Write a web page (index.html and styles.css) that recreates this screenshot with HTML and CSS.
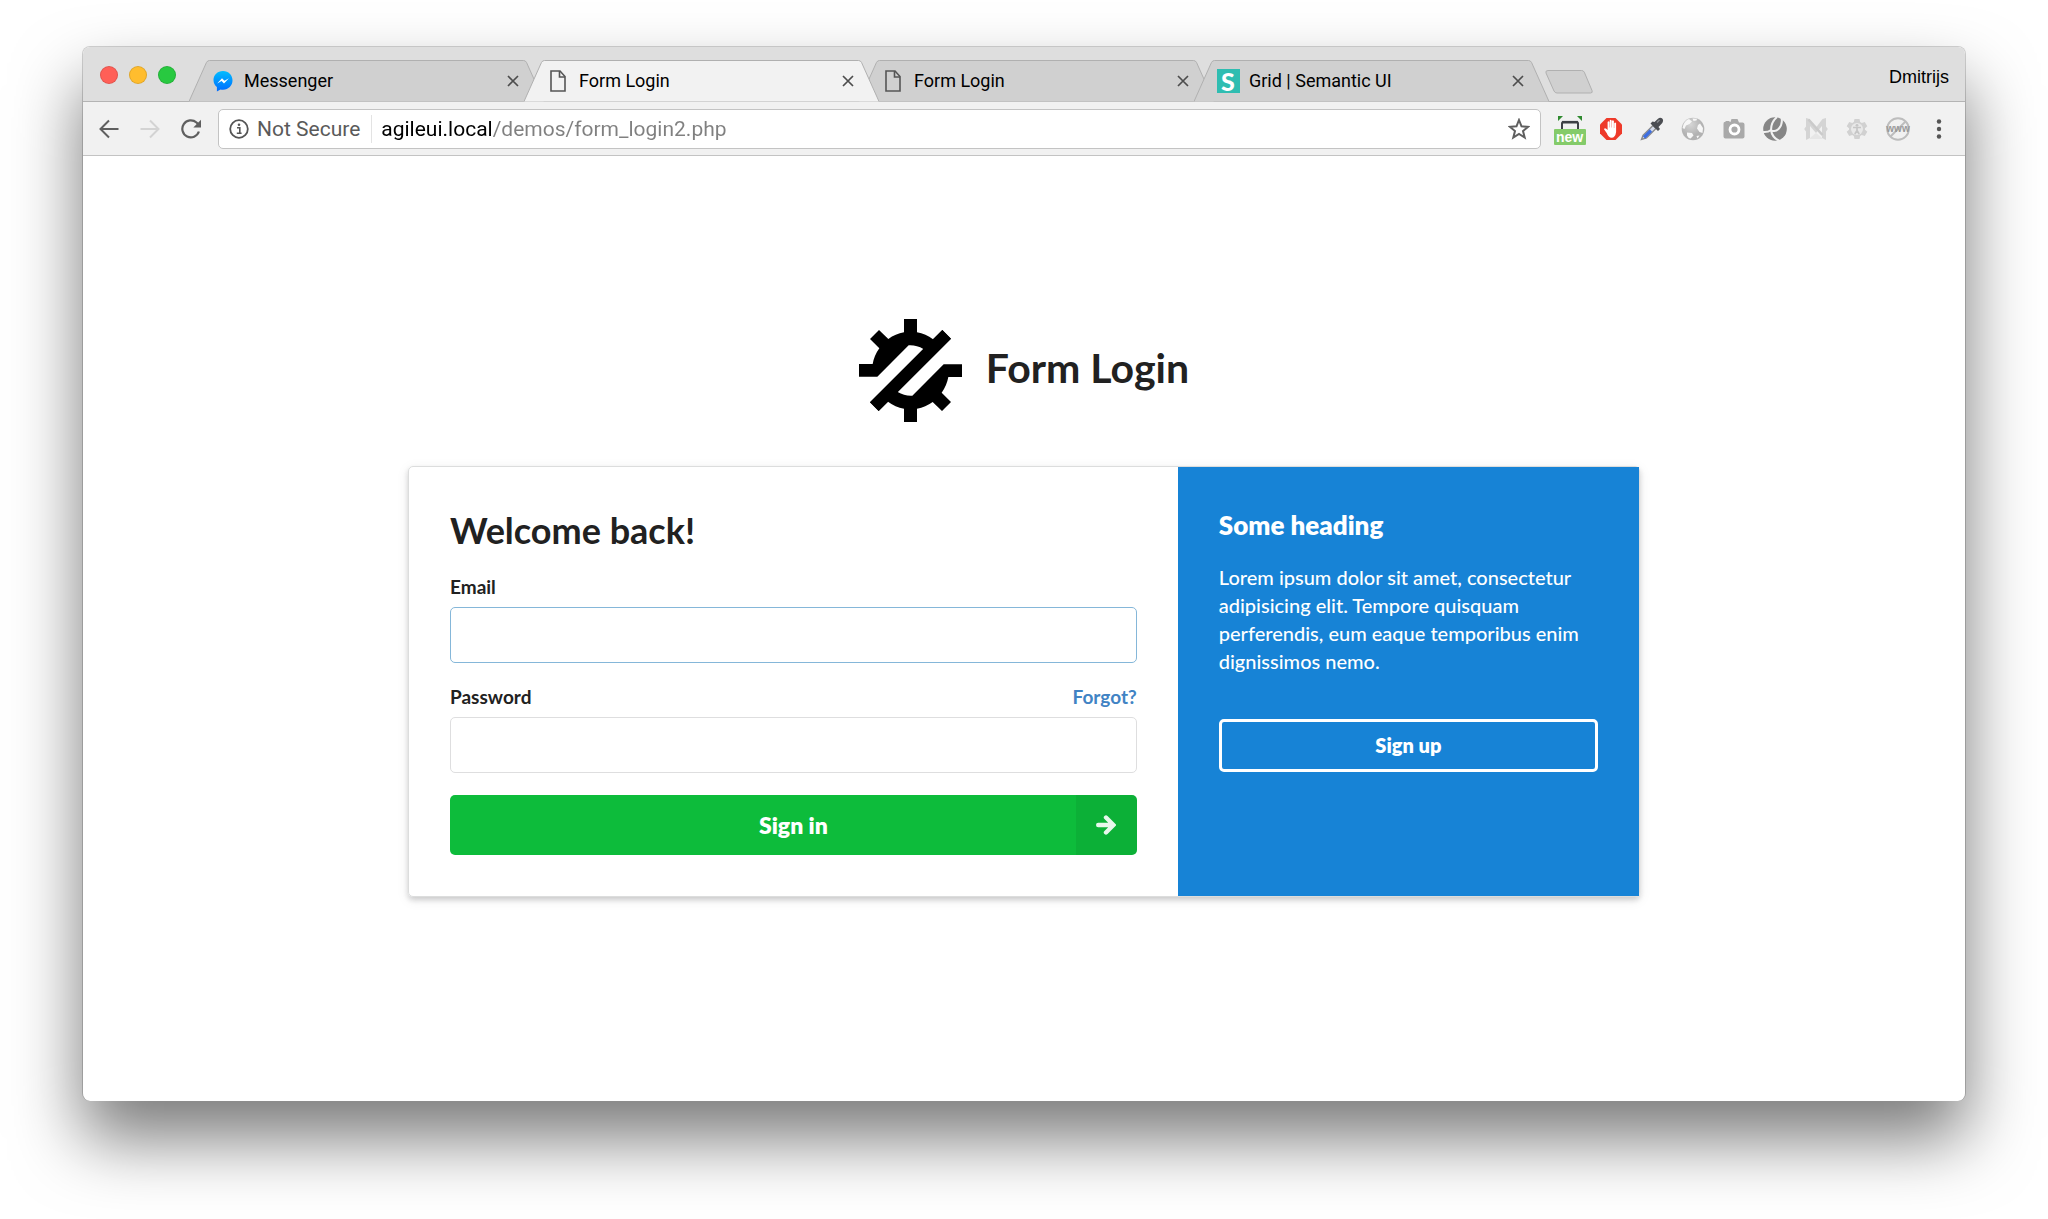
FILE: index.html
```html
<!DOCTYPE html>
<html lang="en">
<head>
<meta charset="utf-8">
<title>Form Login</title>
<link rel="stylesheet" href="styles.css">
</head>
<body>
<svg class="defs" aria-hidden="true">
  <symbol id="tab-shape" viewBox="0 0 356 42" preserveAspectRatio="none">
    <path d="M0 41.500L17.500 2.500Q18.500 .5 20.500 .5H335.500Q337.500 .5 338.500 2.500L356 41.500"/>
  </symbol>
  <symbol id="page" viewBox="0 0 16 22">
    <path d="M1 1h9l5 5.500V21H1z" fill="none" stroke="#555" stroke-width="1.600"/>
    <path d="M9.500 1v6H15" fill="none" stroke="#555" stroke-width="1.600"/>
  </symbol>
  <symbol id="close" viewBox="0 0 12 12">
    <path d="M1 1l10 10M11 1L1 11" stroke="#4d4d4d" stroke-width="1.700" fill="none"/>
  </symbol>
</svg>

<div class="window">
  <header class="tab-strip">
    <div class="lights">
      <button class="light red" aria-label="Close"></button>
      <button class="light yellow" aria-label="Minimise"></button>
      <button class="light green" aria-label="Zoom"></button>
    </div>
    <nav class="tabs">
      <div class="tab">
        <svg class="tab-bg"><use href="#tab-shape"/></svg>
        <span class="favicon"><svg width="20" height="21" viewBox="0 0 20 21"><defs><linearGradient id="msg" x1="0" y1="0" x2="0" y2="1"><stop offset="0" stop-color="#00bdff"/><stop offset="1" stop-color="#006aff"/></linearGradient></defs><path d="M10 0C4.400 0 .5 4 .5 9c0 3 1.300 5.400 3.400 7V20.500l3.600-2c.8.200 1.600.3 2.500.3 5.500 0 9.500-4.300 9.500-9.500S15.500 0 10 0z" fill="url(#msg)"/><path d="M4.200 12.400L9 7.300l2.500 2.500 4.400-2.500-4.900 5.200-2.400-2.600z" fill="#fff"/></svg></span>
        <a href="#" class="tab-title">Messenger</a>
        <button class="tab-close" aria-label="Close tab"><svg width="12" height="12"><use href="#close"/></svg></button>
      </div>
      <div class="tab active">
        <svg class="tab-bg"><use href="#tab-shape"/></svg>
        <span class="favicon"><svg width="16" height="22"><use href="#page"/></svg></span>
        <a href="#" class="tab-title">Form Login</a>
        <button class="tab-close" aria-label="Close tab"><svg width="12" height="12"><use href="#close"/></svg></button>
      </div>
      <div class="tab">
        <svg class="tab-bg"><use href="#tab-shape"/></svg>
        <span class="favicon"><svg width="16" height="22"><use href="#page"/></svg></span>
        <a href="#" class="tab-title">Form Login</a>
        <button class="tab-close" aria-label="Close tab"><svg width="12" height="12"><use href="#close"/></svg></button>
      </div>
      <div class="tab">
        <svg class="tab-bg"><use href="#tab-shape"/></svg>
        <span class="favicon"><span class="semantic">S</span></span>
        <a href="#" class="tab-title">Grid | Semantic UI</a>
        <button class="tab-close" aria-label="Close tab"><svg width="12" height="12"><use href="#close"/></svg></button>
      </div>
      <button class="new-tab" aria-label="New tab"><svg width="48" height="24" viewBox="0 0 48 24"><path d="M3 .5H36.500Q38.500 .5 39.300 2.200L47 20.500Q48 23 45.500 23H12Q10 23 9 21L1 3Q.2 .5 3 .5z" fill="#d0d0d0" stroke="#b0b0b0"/></svg></button>
    </nav>
    <span class="profile">Dmitrijs</span>
  </header>

  <div class="toolbar">
    <button class="nav-btn" aria-label="Back"><svg width="20" height="20" viewBox="0 0 20 20"><path d="M19.500 10H2M10 1.500L1.500 10l8.500 8.500" fill="none" stroke="#5f5f5f" stroke-width="2"/></svg></button>
    <button class="nav-btn" aria-label="Forward"><svg width="20" height="20" viewBox="0 0 20 20"><path d="M.5 10H18M10 1.500l8.500 8.500-8.500 8.500" fill="none" stroke="#d3d3d3" stroke-width="2"/></svg></button>
    <button class="nav-btn" aria-label="Reload"><svg width="20" height="20" viewBox="0 0 20 20"><path d="M17.900 12.500A8.500 8.500 0 1 1 15.500 3.500L17.500 5.500" fill="none" stroke="#5f5f5f" stroke-width="2.200"/><path d="M20 .8V8.500H12.300z" fill="#5f5f5f"/></svg></button>
    <div class="address">
      <svg width="20" height="20" viewBox="0 0 20 20"><circle cx="10" cy="10" r="8.800" fill="none" stroke="#555" stroke-width="1.800"/><path d="M8 8.700h2.800v5.600M7.800 14.300h4.800" fill="none" stroke="#555" stroke-width="1.600"/><circle cx="10" cy="5.700" r="1.300" fill="#555"/></svg>
      <label class="security" for="url">Not Secure</label>
      <input id="url" class="url" type="text" value="agileui.local/demos/form_login2.php">
      <button class="star" aria-label="Bookmark"><svg width="22" height="22" viewBox="0 0 22 22"><path d="M11 2l2.500 6.300 6.700.5-5.200 4.300 1.700 6.500L11 16l-5.700 3.600L7 13.100 1.800 8.800l6.700-.5z" fill="none" stroke="#5f5f5f" stroke-width="2"/></svg></button>
    </div>
    <div class="extensions">
      <button class="ext" aria-label="Screen capture"><span class="capture"><svg width="24" height="13" viewBox="0 0 24 13"><path d="M0 0h5L0 5zM24 0h-5l5 5z" fill="#2f8a2f"/><path d="M4 13V7.500Q4 6 5.500 6h13Q20 6 20 7.500V13" fill="none" stroke="#3d4045" stroke-width="2"/><path d="M4 6.200h16" stroke="#3d4045" stroke-width="2.600"/></svg><span class="new">new</span></span></button>
      <button class="ext" aria-label="Ad blocker"><svg width="24" height="24" viewBox="0 0 24 24"><path d="M7.500 1h9L23 7.500v9L16.500 23h-9L1 16.500v-9z" fill="#ee3a2a"/><path d="M7.700 16L5 12.300Q5.500 10.500 7.200 11.700L8.600 13V5Q9.500 3.700 10.400 5V10.500h.3V3.400Q11.600 2 12.600 3.400V10.500h.3V4Q13.900 2.700 14.900 4V11h.3V6.200Q16.200 5 17.100 6.200V15Q16.300 20.800 12.500 20.800 9.500 20.800 7.700 16z" fill="#fff"/></svg></button>
      <button class="ext" aria-label="Colour picker"><svg width="24" height="24" viewBox="0 0 24 24"><path d="M1.500 22.500L3 18.500 13 8.500l3 3-9.500 9.500z" fill="#d5dceb" stroke="#8b8b8b" stroke-width="1.400"/><path d="M4 20.500L11 13.500" stroke="#3f6fe0" stroke-width="3.200"/><path d="M10.500 6.500l7.500 7.500 2-2-1.500-2 3.800-4Q24 3 22 1.300 20 0 18 1.700L14.500 5 12.500 4.500z" fill="#4b4d52"/><path d="M17 5.500l2.500-2.500" stroke="#8a8c90" stroke-width="1.500"/></svg></button>
      <button class="ext" aria-label="Web tools"><svg width="24" height="24" viewBox="0 0 24 24"><defs><radialGradient id="globe" cx=".4" cy=".3"><stop offset="0" stop-color="#d6d6d6"/><stop offset="1" stop-color="#b2b2b2"/></radialGradient></defs><circle cx="12" cy="12" r="11.300" fill="url(#globe)"/><path d="M2.500 7.500Q4.500 3 8 2L11 4.500 8.500 7 5 8.500 3.500 12 1.500 11zM11.500 1.500L16 1.800 15.500 3.500 12.500 4zM19 6.500l3 4.500-.5 5L18.500 15l-2.500-3.500L17 8zM6 15.500l5 .5 1.500 2.500-3 3Q7 21 6 18.500zM15.500 19l3-.5-2 3z" fill="#f7f7f7"/></svg></button>
      <button class="ext" aria-label="Screenshot"><svg width="24" height="24" viewBox="0 0 24 24"><path d="M2.500 5h1V4h4V5h1L9.500 2h6L17 5.500H20.500q2 0 2 2v12q0 2-2 2h-17q-2 0-2-2V7q0-2 1-2z" fill="#a9a9a9"/><circle cx="12.500" cy="12.500" r="4.500" fill="#a9a9a9" stroke="#fff" stroke-width="2.800"/></svg></button>
      <button class="ext" aria-label="Browser tools"><svg width="24" height="24" viewBox="0 0 24 24"><circle cx="12" cy="12" r="11.800" fill="#868686"/><path d="M14 0Q8 5 8 13 12 15.500 15.500 12 20 7 18.500 1M0 15Q5 15.500 8 13M8 13Q9 20.500 16.500 24" fill="none" stroke="#f1f1f1" stroke-width="2"/></svg></button>
      <button class="ext" aria-label="Mail"><svg width="24" height="24" viewBox="0 0 24 24"><path d="M2 1L5.500 2 12 10.500 18.500 2 22 1v8.500L23.800 12 22 14.500V23L18 21V9L12 16 6 9V21L2 23V14.500L.2 12 2 9.500z" fill="#d4d4d4"/><path d="M6 21L12 16 18 21V22H6z" fill="#e6e6e6"/><path d="M4.500 2.500L18.500 18" stroke="#cacaca" stroke-width="2.600"/></svg></button>
      <button class="ext" aria-label="Accessibility"><svg width="24" height="24" viewBox="0 0 24 24"><path d="M9.500 2h5l.7 3 1.600.9 3-1 2.500 4.300-2.300 2v1.600l2.300 2-2.500 4.300-3-1-1.600.9-.7 3h-5l-.7-3-1.600-.9-3 1-2.500-4.300 2.300-2v-1.600l-2.300-2 2.500-4.300 3 1 1.600-.9z" fill="#d1d1d1"/><circle cx="12" cy="12" r="6" fill="#e9e9e9"/><circle cx="12" cy="8.300" r="1.400" fill="#c6c6c6"/><path d="M8 10.500h8M12 10v3.500L9.800 17M12 13.500l2.200 3.500" stroke="#c6c6c6" stroke-width="1.700" fill="none"/></svg></button>
      <button class="ext" aria-label="WWW"><svg width="26" height="24" viewBox="0 0 26 24"><circle cx="13" cy="12" r="10.800" fill="none" stroke="#bdbdbd" stroke-width="2"/><path d="M5.500 19.500l15-15" stroke="#bdbdbd" stroke-width="2"/><text x="13" y="15" text-anchor="middle" class="www">www</text></svg></button>
      <button class="ext" aria-label="Menu"><svg width="6" height="22" viewBox="0 0 6 22"><g fill="#555"><circle cx="3" cy="3.500" r="2.200"/><circle cx="3" cy="11" r="2.200"/><circle cx="3" cy="18.500" r="2.200"/></g></svg></button>
    </div>
  </div>

  <main class="page">
    <div class="brand">
      <svg width="103" height="103" viewBox="57 57 309 309"><defs><path id="half" d="M57 192H98A116 116 0 0 1 118 145L90 117 117 90 145 117A116 116 0 0 1 192 97V57H231V97A116 116 0 0 1 279 118L307 90 333 116 116 333 90 307 250 147A77 77 0 0 0 206 136L112 230H57z"/></defs><use href="#half"/><use href="#half" transform="rotate(180 211.500 211.500)"/></svg>
      <h1>Form Login</h1>
    </div>
    <div class="card">
      <form class="login">
        <h2>Welcome back!</h2>
        <div class="field">
          <div class="label-row"><label for="email">Email</label></div>
          <input id="email" class="focused" type="email">
        </div>
        <div class="field">
          <div class="label-row"><label for="password">Password</label><a href="#">Forgot?</a></div>
          <input id="password" type="password">
        </div>
        <button class="sign-in" type="button"><span class="sign-in-text">Sign in</span><span class="sign-in-icon"><svg width="20" height="20" viewBox="0 0 20 20"><path d="M2.200 10h14M10 2.500L17.500 10 10 17.500" fill="none" stroke="#e8f7ec" stroke-width="4.400" stroke-linecap="round" stroke-linejoin="miter"/></svg></span></button>
      </form>
      <aside class="promo">
        <h3>Some heading</h3>
        <p>Lorem ipsum dolor sit amet, consectetur adipisicing elit. Tempore quisquam perferendis, eum eaque temporibus enim dignissimos nemo.</p>
        <button class="sign-up" type="button">Sign up</button>
      </aside>
    </div>
  </main>
</div>
</body>
</html>
```
FILE: styles.css
```css
* { box-sizing: border-box; }

body {
  margin: 0;
  min-height: 100vh;
  padding: 46px 82px 118px;
  display: flex;
  background: #fff;
  color: #212121;
  font-family: Lato, "Liberation Sans", sans-serif;
  overflow-x: hidden;
}

h1, h2, h3, p { margin: 0; }
button { padding: 0; border: 0; background: none; font: inherit; color: inherit; cursor: pointer; }
a { text-decoration: none; color: inherit; }
svg { display: block; flex: none; }
.defs { position: absolute; width: 0; height: 0; }

.window {
  flex: 1;
  min-width: 0;
  display: flex;
  flex-direction: column;
  border: 1px solid rgba(0, 0, 0, .17);
  border-bottom-width: 0;
  border-radius: 8px;
  background: #fff;
  background-clip: padding-box;
  box-shadow: 0 38px 68px rgba(0, 0, 0, .52);
}

/* Tab strip */
.tab-strip {
  display: flex;
  align-items: flex-end;
  height: 55px;
  padding-right: 16px;
  background: #dedede;
  border-bottom: 1px solid #b4b4b4;
  border-radius: 7px 7px 0 0;
  font: 18px/24px Roboto, sans-serif;
  color: #000;
}
.lights { display: flex; gap: 11px; padding: 0 10px 0 17px; width: 106px; margin-bottom: 17px; }
.light { flex: none; width: 18px; height: 18px; border-radius: 50%; border: 1px solid rgba(0, 0, 0, .12); }
.red { background: #ff5f57; }
.yellow { background: #ffbd2e; }
.green { background: #28c940; }
.tabs { flex: 1; min-width: 0; display: flex; align-items: flex-end; margin-bottom: -1px; }
.tab {
  position: relative;
  flex: 0 1 355px;
  min-width: 0;
  height: 42px;
  margin-right: -20px;
  padding: 0 25px 0 22px;
  display: flex;
  align-items: center;
}
.tab-bg { position: absolute; inset: 0; width: 100%; height: 100%; fill: #d0d0d0; stroke: #b0b0b0; }
.active { z-index: 1; }
.active .tab-bg { fill: #f2f2f2; }
.favicon { position: relative; width: 24px; display: flex; justify-content: center; }
.semantic { width: 23px; height: 24px; background: #2fbdb1; color: #fff; font: 900 25px/24px Lato, sans-serif; text-align: center; }
.tab-title { position: relative; flex: 1; min-width: 0; margin-left: 9px; white-space: nowrap; overflow: hidden; }
.tab-close { position: relative; }
.new-tab { margin: 0 0 8px 16px; }
.profile { font: 18px/24px "Liberation Sans", sans-serif; margin-bottom: 12px; }

/* Toolbar */
.toolbar {
  display: flex;
  align-items: center;
  height: 54px;
  padding-left: 5px;
  background: #f1f1f1;
  border-bottom: 1px solid #c3c3c3;
  font: 21px/28px Roboto, sans-serif;
}
.nav-btn { width: 41px; height: 40px; display: grid; place-items: center; }
.address {
  flex: 1;
  min-width: 0;
  height: 40px;
  margin-left: 7px;
  padding: 0 10px 0 10px;
  display: flex;
  align-items: center;
  background: #fff;
  border: 1px solid #c3c3c3;
  border-radius: 5px;
}
.security { margin-left: 8px; padding-right: 11px; color: #5a5a5a; border-right: 1px solid #e3e3e3; white-space: nowrap; }
.url {
  flex: 1;
  min-width: 0;
  margin-left: 9px;
  padding: 0;
  border: 0;
  outline: 0;
  font: inherit;
  color: transparent;
  background: linear-gradient(to right, #000 112px, #808080 112px);
  -webkit-background-clip: text;
  background-clip: text;
}
.extensions { display: flex; padding: 0 6px 0 8px; }
.ext { width: 41px; height: 40px; display: grid; place-items: center; }
.capture { display: grid; justify-items: center; padding-top: 4px; }
.new { width: 32px; height: 16px; border-radius: 1px; background: #84cb6a; color: #fff; font: bold 14px/16px "Liberation Sans", sans-serif; }
.www { font: bold 10px "Liberation Sans", sans-serif; fill: #999; }

/* Page */
.page { flex: 1; display: flex; flex-direction: column; align-items: center; padding: 163px 24px 48px; }
.brand { display: flex; align-items: center; gap: 24px; margin-bottom: 44px; }
h1 { padding-bottom: 6px; font-size: 41px; line-height: 52px; font-weight: 700; }
.card {
  width: 100%;
  max-width: 1232px;
  display: grid;
  grid-template-columns: 10fr 6fr;
  border: 1px solid #dcdddd;
  border-radius: 5px;
  box-shadow: 0 3px 5px rgba(34, 36, 38, .18), 0 3px 13px rgba(34, 36, 38, .08);
}
.login { padding: 42px 41px 41px; }
h2 { font-size: 36px; line-height: 42px; margin-bottom: 24px; }
.field { margin-bottom: 22px; }
.label-row { display: flex; justify-content: space-between; margin-bottom: 8px; font-size: 19px; line-height: 24px; font-weight: 700; }
.label-row a { color: #4183c4; }
.field input { display: block; width: 100%; height: 56px; padding: 0 18px; border: 1px solid #dededf; border-radius: 5px; outline: 0; font: 19px Lato, sans-serif; }
.field .focused { border-color: #85b7d9; }
.sign-in {
  width: 100%;
  height: 60px;
  display: grid;
  grid-template-columns: 61px 1fr 61px;
  align-items: center;
  overflow: hidden;
  border-radius: 5px;
  background: #0dbc3b;
  color: #fff;
  font-size: 23px;
  font-weight: 800;
}
.sign-in-text { grid-column: 2; }
.sign-in-icon { height: 100%; display: grid; place-items: center; background: rgba(0, 0, 0, .06); }
.promo { padding: 42px 41px; background: #1783d6; color: #fff; }
h3 { font-size: 26px; line-height: 32px; font-weight: 800; margin-bottom: 22px; }
.promo p { font-size: 20px; line-height: 28px; font-weight: 500; margin-bottom: 44px; }
.sign-up { width: 100%; height: 53px; padding-bottom: 2px; border: 3px solid #fff; border-radius: 5px; font-size: 20px; font-weight: 800; }
```
